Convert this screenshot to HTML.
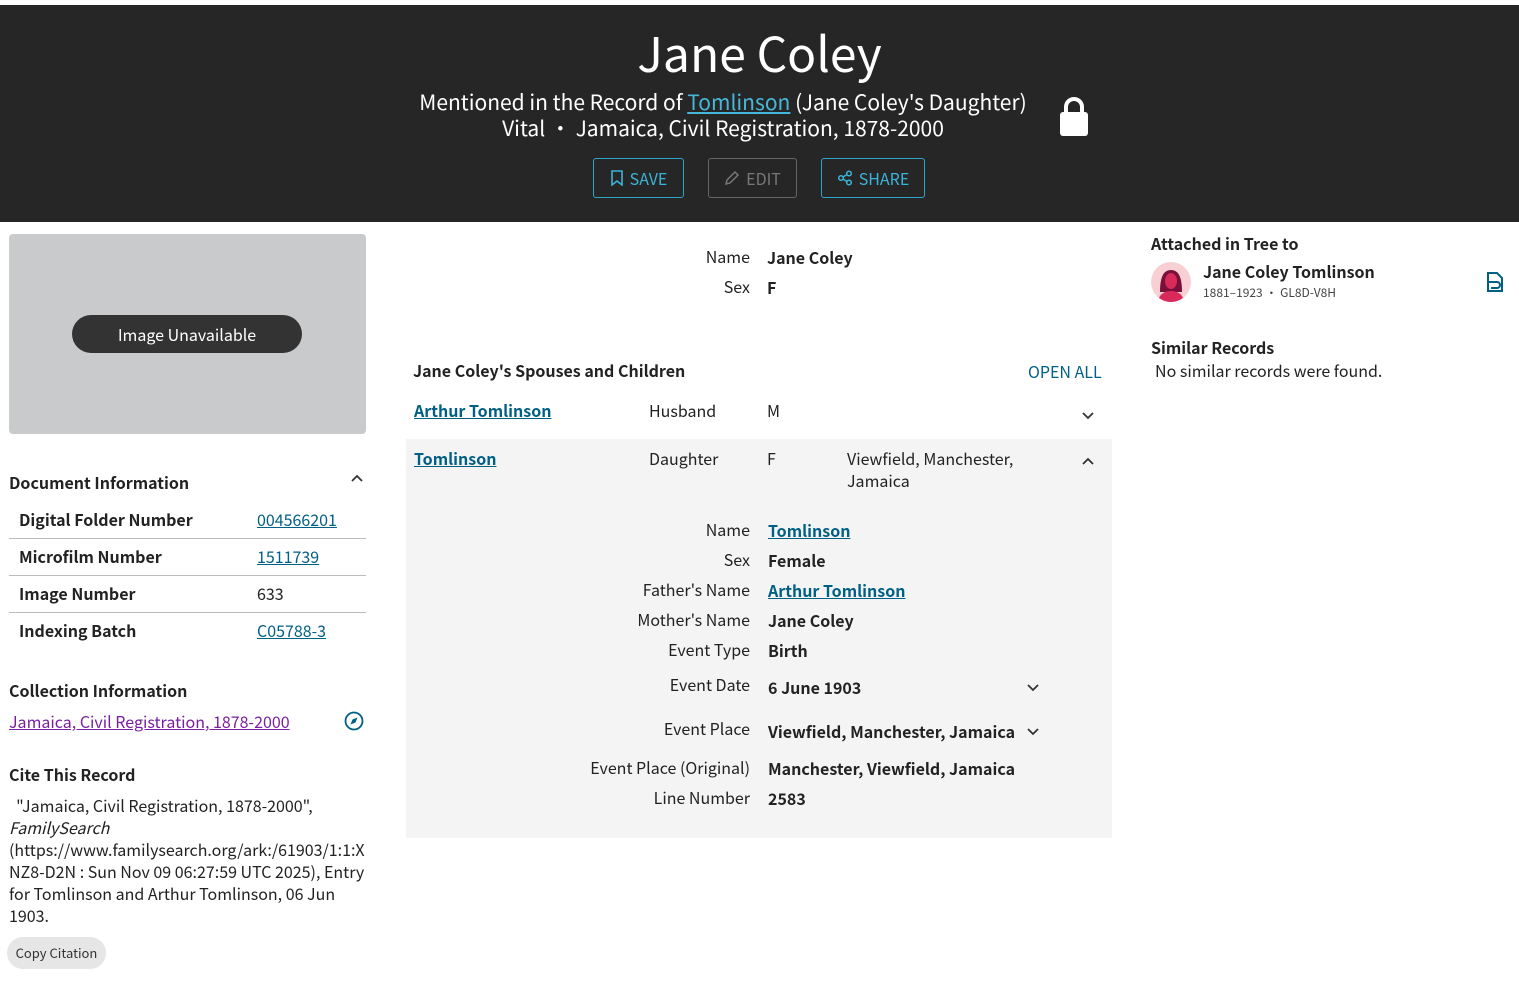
<!DOCTYPE html>
<html><head><meta charset="utf-8"><style>
*{box-sizing:border-box;margin:0;padding:0}
body{width:1519px;height:995px;background:#fff;font-family:"Noto Sans CJK SC","Liberation Sans",sans-serif;color:#222;position:relative;overflow:hidden;font-size:16px}
.a{position:absolute;white-space:nowrap;line-height:1.2}
.hdr{position:absolute;left:0;top:5px;width:1519px;height:217px;background:#262626;color:#fff}
a,.lk{color:#005f85;text-decoration:underline}
.btn{position:absolute;top:153px;height:40px;border:1px solid #2aa5c8;border-radius:3px;color:#3ab4d8;font-size:16px;display:flex;align-items:center;justify-content:center;gap:6px}
.b{font-weight:600}
.lbl{text-align:right;width:200px}
.row{position:absolute;left:9px;width:357px;height:37px;border-bottom:1px solid #bbb;font-size:16px}
</style></head><body>
<div class="hdr">
<div class="a" style="left:0;width:1519px;text-align:center;top:18px;font-size:48px;line-height:56px">Jane Coley</div>
<div class="a" style="left:0;width:1446px;text-align:center;top:83px;font-size:21px;line-height:28px">Mentioned in the Record of <span style="color:#47b7d9;text-decoration:underline">Tomlinson</span> (Jane Coley's Daughter)</div>
<div class="a" style="left:0;width:1446px;text-align:center;top:109px;font-size:21px;line-height:28px">Vital • Jamaica, Civil Registration, 1878-2000</div>
<svg class="a" style="left:1059px;top:90px" width="30" height="42" viewBox="0 0 30 42"><path d="M7 18V12a8 8 0 0 1 16 0v6" stroke="#fff" stroke-width="4" fill="none"/><rect x="1" y="17" width="28" height="24" rx="3" fill="#fff"/></svg>
<div class="btn" style="left:593px;width:91px"><svg width="14" height="16" viewBox="0 0 14 16"><path d="M2 1h10v14l-5-4-5 4z" fill="none" stroke="#3ab4d8" stroke-width="1.6"/></svg>SAVE</div>
<div class="btn" style="left:708px;width:89px;border-color:#666;color:#777"><svg width="16" height="16" viewBox="0 0 16 16"><path d="M2 14l1-4 8-8 3 3-8 8z" fill="none" stroke="#777" stroke-width="1.5"/></svg>EDIT</div>
<div class="btn" style="left:821px;width:104px"><svg width="16" height="16" viewBox="0 0 16 16"><g fill="none" stroke="#3ab4d8" stroke-width="1.5"><circle cx="4" cy="8" r="2.3"/><circle cx="12" cy="3.5" r="2.3"/><circle cx="12" cy="12.5" r="2.3"/><path d="M6 7l4-2.5M6 9l4 2.5"/></g></svg>SHARE</div>
</div>

<div class="a" style="left:9px;top:234px;width:357px;height:200px;background:#c8cacb;border-radius:4px"></div>
<div class="a" style="left:72px;top:315px;width:230px;height:38px;background:#333;border-radius:19px;color:#fff;text-align:center;line-height:38px;font-size:16px">Image Unavailable</div>

<div class="a b" style="left:9px;top:473px;font-size:16px">Document Information</div>
<svg class="a" style="left:350px;top:473px" width="14" height="10" viewBox="0 0 14 10"><path d="M2 8l5-5 5 5" stroke="#333" stroke-width="1.8" fill="none"/></svg>
<div class="row" style="top:502px"><span class="a b" style="left:10px;top:8px">Digital Folder Number</span><span class="a lk" style="left:248px;top:8px">004566201</span></div>
<div class="row" style="top:539px"><span class="a b" style="left:10px;top:8px">Microfilm Number</span><span class="a lk" style="left:248px;top:8px">1511739</span></div>
<div class="row" style="top:576px"><span class="a b" style="left:10px;top:8px">Image Number</span><span class="a" style="left:248px;top:8px">633</span></div>
<div class="row" style="top:613px;border:none"><span class="a b" style="left:10px;top:8px">Indexing Batch</span><span class="a lk" style="left:248px;top:8px">C05788-3</span></div>

<div class="a b" style="left:9px;top:681px">Collection Information</div>
<div class="a" style="left:9px;top:712px;color:#7a1fa2;text-decoration:underline">Jamaica, Civil Registration, 1878-2000</div>
<svg class="a" style="left:344px;top:711px" width="20" height="20" viewBox="0 0 20 20"><circle cx="10" cy="10" r="8.5" fill="none" stroke="#005f85" stroke-width="1.8"/><path d="M13.5 6.5l-2 5-5 2 2-5z" fill="#005f85"/></svg>

<div class="a b" style="left:9px;top:765px">Cite This Record</div>
<div class="a" style="left:9px;top:794px;width:357px;white-space:normal;overflow-wrap:anywhere;line-height:22px;font-size:16px">&nbsp;&nbsp;"Jamaica, Civil Registration, 1878-2000", <i>FamilySearch</i> (https://www.familysearch.org/ark:/61903/1:1:XNZ8-D2N : Sun Nov 09 06:27:59 UTC 2025), Entry for Tomlinson and Arthur Tomlinson, 06 Jun 1903.</div>
<div class="a" style="left:7px;top:937px;width:99px;height:32px;background:#e6e6e6;border-radius:16px;font-size:13px;text-align:center;line-height:32px;color:#333">Copy Citation</div>

<div class="a lbl" style="left:550px;top:247px">Name</div><div class="a b" style="left:767px;top:248px">Jane Coley</div>
<div class="a lbl" style="left:550px;top:277px">Sex</div><div class="a b" style="left:767px;top:278px">F</div>

<div class="a b" style="left:413px;top:361px">Jane Coley's Spouses and Children</div>
<div class="a" style="left:1028px;top:362px;color:#005f85">OPEN ALL</div>
<div class="a lk b" style="left:414px;top:401px">Arthur Tomlinson</div>
<div class="a" style="left:649px;top:401px">Husband</div>
<div class="a" style="left:767px;top:401px">M</div>
<svg class="a" style="left:1081px;top:411px" width="14" height="10" viewBox="0 0 14 10"><path d="M2 2l5 5 5-5" stroke="#333" stroke-width="1.8" fill="none"/></svg>

<div class="a" style="left:406px;top:439px;width:706px;height:399px;background:#f4f4f4"></div>
<div class="a lk b" style="left:414px;top:449px">Tomlinson</div>
<div class="a" style="left:649px;top:449px">Daughter</div>
<div class="a" style="left:767px;top:449px">F</div>
<div class="a" style="left:847px;top:447px;line-height:22px;white-space:normal;width:190px">Viewfield, Manchester, Jamaica</div>
<svg class="a" style="left:1081px;top:456px" width="14" height="10" viewBox="0 0 14 10"><path d="M2 8l5-5 5 5" stroke="#333" stroke-width="1.8" fill="none"/></svg>

<div class="a lbl" style="left:550px;top:520px">Name</div><div class="a lk b" style="left:768px;top:521px">Tomlinson</div>
<div class="a lbl" style="left:550px;top:550px">Sex</div><div class="a b" style="left:768px;top:551px">Female</div>
<div class="a lbl" style="left:550px;top:580px">Father's Name</div><div class="a lk b" style="left:768px;top:581px">Arthur Tomlinson</div>
<div class="a lbl" style="left:550px;top:610px">Mother's Name</div><div class="a b" style="left:768px;top:611px">Jane Coley</div>
<div class="a lbl" style="left:550px;top:640px">Event Type</div><div class="a b" style="left:768px;top:641px">Birth</div>
<div class="a lbl" style="left:550px;top:675px">Event Date</div><div class="a b" style="left:768px;top:678px">6 June 1903</div>
<svg class="a" style="left:1026px;top:683px" width="14" height="10" viewBox="0 0 14 10"><path d="M2 2l5 5 5-5" stroke="#333" stroke-width="1.8" fill="none"/></svg>
<div class="a lbl" style="left:550px;top:719px">Event Place</div><div class="a b" style="left:768px;top:722px">Viewfield, Manchester, Jamaica</div>
<svg class="a" style="left:1026px;top:727px" width="14" height="10" viewBox="0 0 14 10"><path d="M2 2l5 5 5-5" stroke="#333" stroke-width="1.8" fill="none"/></svg>
<div class="a lbl" style="left:550px;top:758px">Event Place (Original)</div><div class="a b" style="left:768px;top:759px">Manchester, Viewfield, Jamaica</div>
<div class="a lbl" style="left:550px;top:788px">Line Number</div><div class="a b" style="left:768px;top:789px">2583</div>

<div class="a b" style="left:1151px;top:234px">Attached in Tree to</div>
<svg class="a" style="left:1151px;top:262px" width="40" height="40" viewBox="0 0 40 40"><circle cx="20" cy="20" r="20" fill="#f8d0d4"/><path d="M9 30c0-14 3-22 11-22s11 8 11 22z" fill="#7a0f3a"/><ellipse cx="20" cy="19" rx="6" ry="8" fill="#d92a5c"/><path d="M8 36c2-5 7-7 12-7s10 2 12 7a20 20 0 0 1-24 0z" fill="#d92a5c"/></svg>
<div class="a b" style="left:1203px;top:262px">Jane Coley Tomlinson</div>
<div class="a" style="left:1203px;top:286px;font-size:12px;color:#444">1881–1923 • GL8D-V8H</div>
<svg class="a" style="left:1486px;top:271px" width="18" height="22" viewBox="0 0 18 22"><path d="M2 2h9l5 5v13H2z" fill="none" stroke="#005f85" stroke-width="2"/><path d="M1 11h10a3 3 0 0 1 0 6H5" fill="none" stroke="#005f85" stroke-width="2"/></svg>
<div class="a b" style="left:1151px;top:338px">Similar Records</div>
<div class="a" style="left:1155px;top:361px">No similar records were found.</div>
</body></html>
